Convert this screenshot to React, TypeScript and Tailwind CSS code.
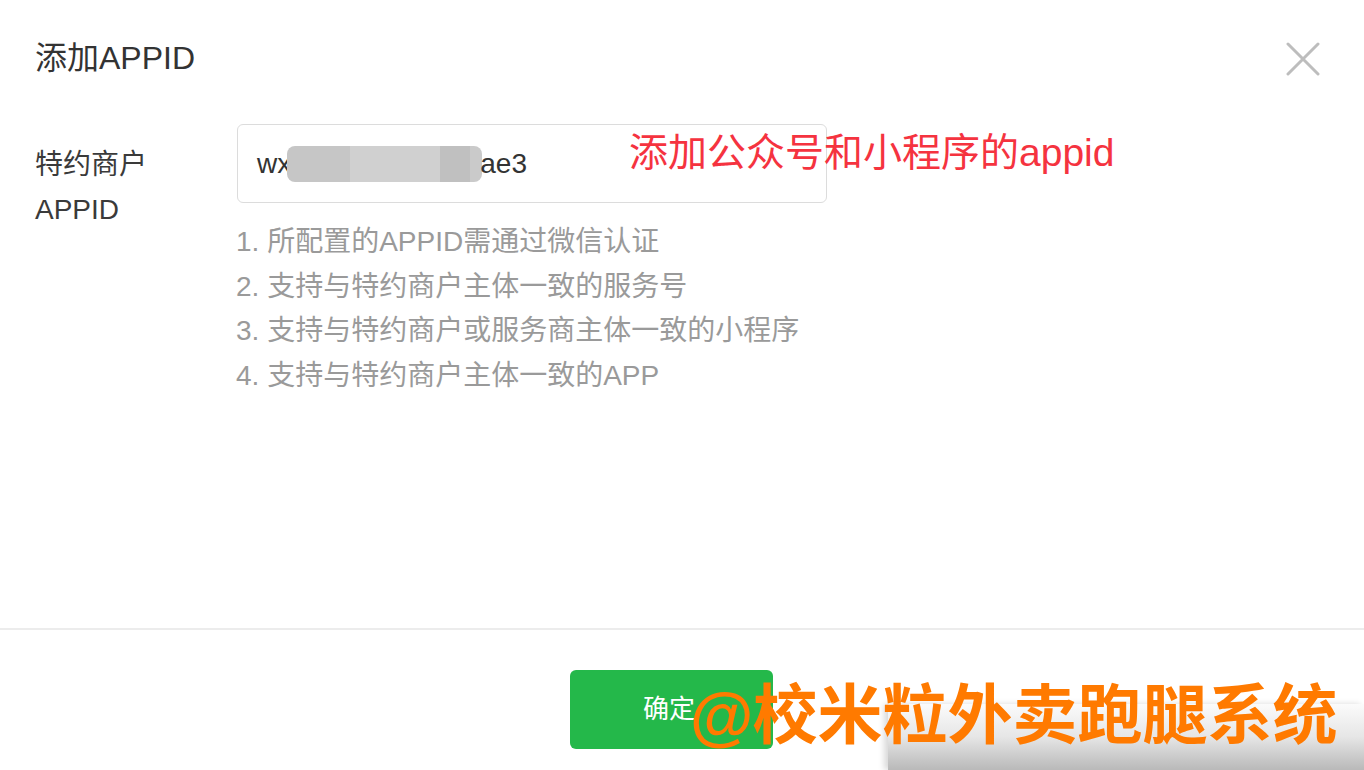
import React from "react";

const hints = [
  "1. 所配置的APPID需通过微信认证",
  "2. 支持与特约商户主体一致的服务号",
  "3. 支持与特约商户或服务商主体一致的小程序",
  "4. 支持与特约商户主体一致的APP",
];

export default function App() {
  return (
    <div
      className="relative w-[1364px] h-[770px] overflow-hidden bg-white flex flex-col"
      style={{ fontFamily: '"Liberation Sans", "Noto Sans CJK SC", sans-serif' }}
    >
      {/* header */}
      <div className="flex items-start justify-between pl-[35px] pr-[44px] pt-[40px]">
        <div className="text-[32px] leading-[36px] text-[#333]">添加APPID</div>
        <svg width="34" height="34" viewBox="0 0 34 34" className="mt-[2px]">
          <path d="M2 2 L32 32 M32 2 L2 32" stroke="#bdbdbd" strokeWidth="3" strokeLinecap="round" />
        </svg>
      </div>

      {/* body */}
      <div className="flex pl-[35px] mt-[48px]">
        <div className="w-[202px] pt-[18px] text-[28px] leading-[45px] text-[#3a3a3a]">
          <div>特约商户</div>
          <div>APPID</div>
        </div>
        <div className="flex flex-col">
          <div className="w-[590px] h-[79px] border-[1.5px] border-[#dcdcdc] rounded-[6px] flex items-center pl-[19px] text-[28px] text-[#333]">
            <span>wx</span>
            <span className="flex h-[36px] -ml-[4px] rounded-[8px] overflow-hidden">
              <span className="w-[63px] bg-[#c6c6c6]" />
              <span className="w-[90px] bg-[#d0d0d0]" />
              <span className="w-[30px] bg-[#c0c0c0]" />
              <span className="w-[12px] bg-[#cacaca]" />
            </span>
            <span className="-ml-[2px]">ae3</span>
          </div>
          <div className="mt-[17px] -ml-[1px] text-[28px] leading-[44.7px] text-[#9a9a9a]">
            {hints.map((h) => (
              <div key={h}>{h}</div>
            ))}
          </div>
        </div>
      </div>

      {/* red annotation */}
      <div className="absolute left-[629px] top-[131px] text-[39px] leading-[44px] text-[#f5333f] whitespace-nowrap">
        添加公众号和小程序的appid
      </div>

      <div className="flex-1" />

      {/* footer */}
      <div className="h-[142px] border-t-[2px] border-[#ececec] pl-[570px] pt-[40px]">
        <div className="w-[203px] h-[79px] rounded-[6px] bg-[#24b84a] flex items-center pl-[73px] text-[26px] text-white">
          确定
        </div>
      </div>

      {/* watermark */}
      <div className="absolute left-[888px] top-[704px] w-[476px] h-[66px] bg-gradient-to-b from-[#fbfbfb] via-[#e6e6e6] to-[#b9b9b9] shadow-[-4px_0_6px_rgba(0,0,0,0.15)]" />
      <div className="absolute left-[690px] top-[676px] text-[65px] leading-[80px] font-bold text-[#ff7a00] whitespace-nowrap">
        <span className="tracking-[-3px]">@</span>
        <span className="ml-[2px]">校米粒外卖跑腿系统</span>
      </div>
    </div>
  );
}
